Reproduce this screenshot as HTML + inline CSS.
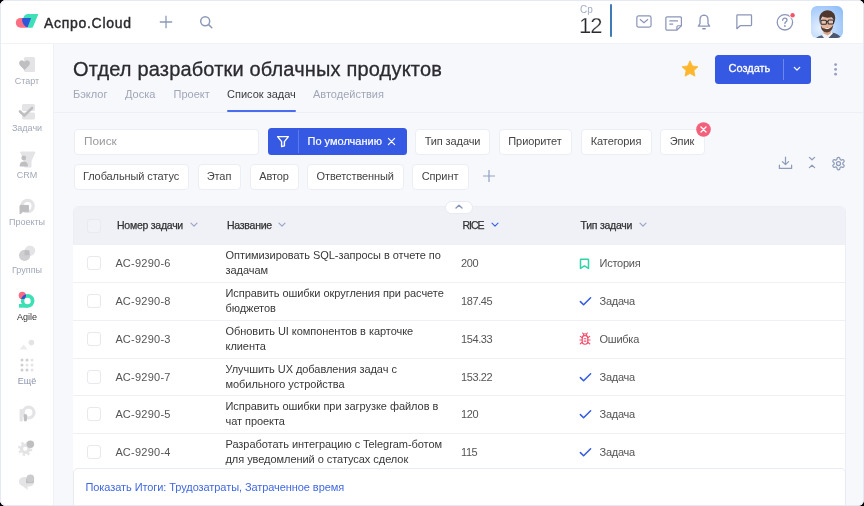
<!DOCTYPE html>
<html lang="ru">
<head>
<meta charset="utf-8">
<title>Аспро.Cloud</title>
<style>
*{box-sizing:border-box;margin:0;padding:0}
html,body{width:864px;height:506px;overflow:hidden;background:#000;font-family:"Liberation Sans",sans-serif;}
#frame{will-change:transform;position:absolute;left:0;top:0;width:864px;height:506px;background:#f7f8fc;border-radius:6px;overflow:hidden;}
#frameb{position:absolute;left:0;top:0;width:864px;height:506px;border:1px solid #e6e8f4;border-radius:6px;z-index:50;pointer-events:none}
.abs{position:absolute;white-space:nowrap}
#header{position:absolute;left:0;top:0;width:864px;height:44px;background:#fff;border-bottom:1px solid #f1f2f8}
#sidebar{position:absolute;left:0;top:44px;width:53.5px;height:462px;background:#fff;border-right:1px solid #f0f1f7}
.slab{position:absolute;left:0;width:54px;text-align:center;font-size:9px;color:#a2a8b8;line-height:10px}
.tab{position:absolute;top:88px;font-size:11px;line-height:13px;color:#a1a6b8;white-space:nowrap}
.fbtn{position:absolute;height:26px;background:#fff;border:1px solid #eceef6;border-radius:4px;font-size:11px;line-height:22.5px;color:#444;letter-spacing:-0.1px;text-align:center;white-space:nowrap}
.th{position:absolute;top:218px;letter-spacing:-0.25px;font-size:10.5px;line-height:14px;color:#333;white-space:nowrap;-webkit-text-stroke:0.25px #333}
.row{position:absolute;left:73px;width:772px;height:38px;border-top:1px solid #eef0f5;background:#fff}
.cb{position:absolute;left:13.5px;top:11px;width:14px;height:14px;border:1px solid #e8e8ed;border-radius:3px;background:#fff}
.num{position:absolute;left:42.5px;top:11px;letter-spacing:0.25px;font-size:11px;line-height:14px;color:#555;white-space:nowrap}
.ttl{position:absolute;left:152.5px;top:3px;letter-spacing:-0.05px;font-size:11px;line-height:15px;color:#383838;white-space:nowrap}
.rice{position:absolute;left:388px;top:11px;letter-spacing:-0.4px;font-size:11px;line-height:14px;color:#555}
.typ{position:absolute;left:526.5px;top:11px;letter-spacing:-0.25px;font-size:11px;line-height:14px;color:#555}
</style>
</head>
<body>
<div id="frame">
<div id="header">
<svg class="abs" style="left:15px;top:13px" width="25" height="16" viewBox="15 13 25 16">
<path d="M20.7 17.9 H27 V27.7 H20.7 A4.9 4.9 0 0 1 20.7 17.9 Z" fill="#fb6f84"/>
<path d="M27.4 14 H37.6 Q38.4 14 38.1 14.8 L33 27 Q32.7 27.7 32 27.7 H27.4 L30 18 H23.4 Q24.2 14.6 27.4 14 Z" fill="#3fe0b8"/>
<path d="M22.4 18 H31.1 L27.6 27.6 Q23 25.6 22.2 21 Q22 19.4 22.4 18 Z" fill="#2f55d8"/>
</svg>
<div class="abs" id="brand" style="left:44px;top:14.7px;font-size:14px;line-height:17px;color:#2a2a2e;-webkit-text-stroke:0.4px #2a2a2e;letter-spacing:0.7px">Аспро.Cloud</div>
<svg class="abs" style="left:159.3px;top:15px" width="14" height="14" viewBox="0 0 14 14"><path d="M7 0.8v12.4M0.8 7h12.4" stroke="#8c9ab8" stroke-width="1.3" fill="none"/></svg>
<svg class="abs" style="left:199px;top:15px" width="14" height="14" viewBox="0 0 14 14"><circle cx="6.2" cy="6.2" r="4.5" stroke="#8c9ab8" stroke-width="1.5" fill="none"/><path d="M9.6 9.6L12.8 12.8" stroke="#8c9ab8" stroke-width="1.5" stroke-linecap="round" fill="none"/></svg>
<div class="abs" style="left:580px;top:5px;font-size:10px;line-height:10px;color:#a3abc4">Ср</div>
<div class="abs" id="d12" style="left:579px;top:14.5px;font-size:22px;line-height:22px;color:#2a2a2e;letter-spacing:-1px;-webkit-text-stroke:0.25px #fff">12</div>
<div class="abs" style="left:609.5px;top:4px;width:2.5px;height:33px;background:#3f7cb6;border-radius:1px"></div>
<!-- mail -->
<svg class="abs" style="left:636.3px;top:15.3px" width="15.9" height="13" viewBox="0 0 17 14" preserveAspectRatio="none"><rect x="0.9" y="0.9" width="15.2" height="12.2" rx="2" fill="none" stroke="#8b95b8" stroke-width="1.3"/><path d="M4.2 4.6L8.5 8.2L12.8 4.6" fill="none" stroke="#8b95b8" stroke-width="1.3"/></svg>
<!-- note -->
<svg class="abs" style="left:664.8px;top:16.3px" width="17.3" height="15" viewBox="0 0 18 16" preserveAspectRatio="none"><path d="M2.4 0.9H15.6Q17.1 0.9 17.1 2.4V10.4L12.4 15.1H2.4Q0.9 15.1 0.9 13.6V2.4Q0.9 0.9 2.4 0.9Z" fill="none" stroke="#8b95b8" stroke-width="1.3"/><path d="M17 10.4H13.6Q12.4 10.4 12.4 11.6V15" fill="none" stroke="#8b95b8" stroke-width="1.3"/><path d="M4.5 5.3H13.5M4.5 8.6H8.5" stroke="#8b95b8" stroke-width="1.3"/></svg>
<!-- bell -->
<svg class="abs" style="left:697px;top:14px" width="14" height="17" viewBox="0 0 14 17"><path d="M7 1.2Q11 1.4 11 6V9.6L12.6 12.2H1.4L3 9.6V6Q3 1.4 7 1.2Z" fill="none" stroke="#8b95b8" stroke-width="1.3" stroke-linejoin="round"/><path d="M5.8 14.8H8.2" stroke="#8b95b8" stroke-width="1.4" stroke-linecap="round"/></svg>
<!-- chat -->
<svg class="abs" style="left:736.2px;top:13.8px" width="16.4" height="16.2" viewBox="0 0 17 17" preserveAspectRatio="none"><path d="M1.6 0.9H15.4Q16.1 0.9 16.1 1.6V11.4Q16.1 12.1 15.4 12.1H4.6L0.9 15.4V1.6Q0.9 0.9 1.6 0.9Z" fill="none" stroke="#8b95b8" stroke-width="1.3" stroke-linejoin="round"/></svg>
<!-- help -->
<svg class="abs" style="left:776px;top:12.5px" width="20" height="19" viewBox="0 0 20 19"><circle cx="8.9" cy="9.3" r="7.7" fill="none" stroke="#8b95b8" stroke-width="1.3"/><path d="M6.7 7.3Q6.8 5.2 8.9 5.2Q11 5.2 11 7Q11 8.2 9.8 8.9Q8.9 9.4 8.9 10.6" fill="none" stroke="#8b95b8" stroke-width="1.3" stroke-linecap="round"/><circle cx="8.9" cy="13" r="0.9" fill="#8b95b8"/><circle cx="16.6" cy="2.3" r="3.1" fill="#fff"/><circle cx="16.6" cy="2.3" r="2.2" fill="#f4546c"/></svg>
<!-- avatar -->
<svg class="abs" style="left:811px;top:6px" width="32" height="32" viewBox="0 0 32 32">
<defs><clipPath id="avc"><rect x="0" y="0" width="32" height="32" rx="6"/></clipPath>
<radialGradient id="avg" cx="0.3" cy="0.7" r="0.85"><stop offset="0" stop-color="#e6f1ff"/><stop offset="1" stop-color="#94c0f9"/></radialGradient></defs>
<g clip-path="url(#avc)"><rect width="32" height="32" fill="url(#avg)"/>
<path d="M4.5 32.5 Q6.5 30 11.6 29 L14 32.5 Z" fill="#56647c"/>
<path d="M16.5 32.5 L21 26.6 Q28 28 30.5 32.5 Z" fill="#4a576e"/>
<path d="M11 29.2 L13 27 L17 29 L20.8 25.8 L22 27.2 L17 32.5 H13.4 Z" fill="#f1f3f8"/>
<path d="M12.4 24 H19.6 L20 27 L16.6 29.6 L12.6 27.4 Z" fill="#d9a78c"/>
<ellipse cx="15.9" cy="17.4" rx="6.3" ry="7.8" fill="#e7b59b"/>
<path d="M9.7 19.4 Q10.4 26.4 16.2 26.4 Q21.4 26.2 22.3 18.8 Q20.6 22 18.6 22.2 Q16 21.2 13.4 22.4 Q11 22.2 9.7 19.4 Z" fill="#5b3f33"/>
<path d="M13.2 21.8 Q16.2 24.4 19.4 21.4 Q16.2 22.2 13.2 21.8Z" fill="#fbfbfb"/>
<path d="M8.9 17.4 Q6.6 8.4 12.6 5.2 Q19 2.6 23 7.4 Q25.2 11 23.3 17 Q23 12.8 20.8 11.2 Q15.4 12.4 11.4 10.6 Q9.4 13 8.9 17.4 Z" fill="#4e372c"/>
<rect x="9.9" y="14.3" width="5.5" height="3.9" rx="1" fill="#e9c3ad" stroke="#2a2c33" stroke-width="1.05"/><rect x="17" y="14" width="5.5" height="3.9" rx="1" fill="#e9c3ad" stroke="#2a2c33" stroke-width="1.05"/><path d="M15.4 15.6H17" stroke="#2a2c33" stroke-width="1"/>
</g></svg>
</div>
<div id="sidebar">
<!-- coords inside sidebar are page y - 43 -->
<svg class="abs" style="left:0;top:-1px" width="54" height="463" viewBox="0 43 54 463">
<!-- start -->
<rect x="24" y="57" width="11" height="15" rx="1.5" fill="#e4e4e6"/>
<path d="M24.5 70 L20 65.4 Q18.2 63 20 61 Q22.4 59.2 24.5 61.8 Q26.6 59.2 29 61 Q30.8 63 29 65.4 Z" fill="#bfbfc2"/>
<!-- tasks -->
<rect x="22" y="104" width="13" height="7" rx="1.5" fill="#e4e4e6"/><rect x="22" y="112.5" width="13" height="7" rx="1.5" fill="#e4e4e6"/>
<path d="M20 111.5 L24.3 115.6 L32 108" fill="none" stroke="#bfbfc2" stroke-width="2.6" stroke-linecap="round" stroke-linejoin="round"/>
<!-- crm -->
<path d="M20.5 152 H35 L31 161 V167 H24.5 V161 Z" fill="#e4e4e6" stroke="#e4e4e6" stroke-width="1" stroke-linejoin="round"/>
<circle cx="23.8" cy="158" r="2.4" fill="#bfbfc2"/><path d="M19.6 166.4 Q19.6 161.6 23.8 161.6 Q28 161.6 28 166.4 Z" fill="#bfbfc2"/>
<!-- projects -->
<circle cx="27.6" cy="206" r="5.6" fill="none" stroke="#e4e4e6" stroke-width="3.4"/>
<path d="M20 205.4 H28.4 V211.6 H23 L20 214 Z" fill="#bfbfc2" stroke="#bfbfc2" stroke-width="1" stroke-linejoin="round"/>
<!-- groups -->
<circle cx="30" cy="250.6" r="5.2" fill="#e4e4e6"/><circle cx="24.6" cy="255.4" r="5.6" fill="#cfcfd2"/>
<rect x="24.6" y="250.2" width="4.8" height="5" fill="#bfbfc2"/>
<!-- agile -->
<defs><clipPath id="agc"><circle cx="27.65" cy="300.85" r="6.85"/></clipPath></defs>
<circle cx="27.65" cy="300.85" r="6.85" fill="#3ddfb4"/><rect x="19" y="304" width="8.6" height="3.7" fill="#3ddfb4"/>
<circle cx="27.5" cy="301" r="3.2" fill="#fff"/>
<circle cx="22.3" cy="295.4" r="3.6" fill="#fb6b82"/>
<circle cx="22.3" cy="295.4" r="3.6" fill="#2f55d6" clip-path="url(#agc)"/>
<!-- small dots icon -->
<path d="M19.6 349.4 L23.6 344.6 L27.6 349.4 Z" fill="#ececee"/><circle cx="31.4" cy="342.6" r="2.8" fill="#e4e4e6"/>
<!-- grid -->
<g fill="#cfcfd3"><circle cx="22" cy="360" r="1.5"/><circle cx="27" cy="360" r="1.5"/><circle cx="22" cy="365" r="1.5"/><circle cx="22" cy="370" r="1.5"/><circle cx="27" cy="370" r="1.5"/></g>
<g fill="#e4e4e6"><circle cx="32" cy="360" r="1.5"/><circle cx="27" cy="365" r="1.5"/><circle cx="32" cy="365" r="1.5"/><circle cx="32" cy="370" r="1.5"/></g>
<!-- P icon -->
<circle cx="28.6" cy="412.6" r="5.4" fill="none" stroke="#e4e4e6" stroke-width="3.2"/><rect x="19.6" y="409" width="3.2" height="12.4" rx="1" fill="#e4e4e6"/>
<rect x="23.8" y="414" width="3.2" height="7.4" rx="1.6" fill="#bfbfc2"/>
<!-- gear -->
<g fill="none" stroke="#e4e4e6"><circle cx="25.2" cy="448.8" r="3.7" stroke-width="3.2"/><circle cx="25.2" cy="448.8" r="5.9" stroke-width="2.6" stroke-dasharray="2.3 2.33"/></g>
<circle cx="30.4" cy="444.3" r="3.7" fill="#bfbfc2"/>
<!-- chat -->
<path d="M24.6 477 H29.4 Q34 477 34 481.6 V482 Q34 486.4 29.4 486.4 H27.6 V490 L23 486.2 Q19 485.4 19 481.6 Q19 477 24.6 477 Z" fill="#e4e4e6"/>
<path d="M26 478.6 H34 V481.6 Q34 483.2 32.4 483.2 H26 Z" fill="#bfbfc2"/><circle cx="30.4" cy="478.4" r="3.8" fill="#cbcbce"/>
</svg>
<div class="slab" style="top:32px">Старт</div>
<div class="slab" style="top:79px">Задачи</div>
<div class="slab" style="top:126px">CRM</div>
<div class="slab" style="top:173px">Проекты</div>
<div class="slab" style="top:220.5px">Группы</div>
<div class="slab" style="top:267.5px;color:#333">Agile</div>
<div class="slab" style="top:332px;color:#8b94ab">Ещё</div>
</div>
<div id="main">
<div class="abs" id="title" style="left:73px;top:57px;font-size:20px;line-height:24px;color:#2b2b2f;letter-spacing:0.17px;-webkit-text-stroke:0.3px #2b2b2f">Отдел разработки облачных продуктов</div>
<div class="abs" style="left:54px;top:111.5px;width:810px;height:1px;background:#eff0f7"></div>
<div class="tab" id="t1" style="left:73px">Бэклог</div>
<div class="tab" id="t2" style="left:125px">Доска</div>
<div class="tab" id="t3" style="left:173.5px">Проект</div>
<div class="tab" id="t4" style="left:227px;color:#3c3c40">Список задач</div>
<div class="tab" id="t5" style="left:313px">Автодействия</div>
<div class="abs" style="left:227px;top:110px;width:69px;height:2px;background:#4a6cf0;border-radius:1px"></div>
<!-- star -->
<svg class="abs" style="left:681px;top:60px" width="18" height="17" viewBox="0 0 18 17"><path d="M9 0.8 L11.4 6 L17 6.7 L12.9 10.6 L13.95 16.2 L9 13.45 L4.05 16.2 L5.1 10.6 L1 6.7 L6.6 6 Z" fill="#fcb72e" stroke="#fcb72e" stroke-width="0.8" stroke-linejoin="round"/></svg>
<!-- create button -->
<div class="abs" style="left:715px;top:55px;width:95.5px;height:28.5px;background:#3659e3;border-radius:3.5px"></div>
<div class="abs" id="create" style="left:728.5px;top:61.3px;font-size:11px;line-height:14px;color:#fff;-webkit-text-stroke:0.3px #fff">Создать</div>
<div class="abs" style="left:783px;top:59px;width:1px;height:21px;background:#6d87ec"></div>
<svg class="abs" style="left:792px;top:65px" width="10" height="8" viewBox="0 0 10 8"><path d="M2.3 2.4L5 5.1L7.7 2.4" fill="none" stroke="#fff" stroke-width="1.3" stroke-linecap="round" stroke-linejoin="round"/></svg>
<svg class="abs" style="left:832px;top:61px" width="8" height="17" viewBox="0 0 8 17"><g fill="#97a0be"><circle cx="3.6" cy="3.6" r="1.4"/><circle cx="3.6" cy="8.4" r="1.4"/><circle cx="3.6" cy="13.2" r="1.4"/></g></svg>

<!-- filters row 1 -->
<div class="fbtn" style="left:73.5px;top:128.5px;width:185.5px;text-align:left;padding-left:9.5px;color:#9a9a9e;font-size:11.8px;letter-spacing:0" id="srch">Поиск</div>
<div class="abs" style="left:267.5px;top:128px;width:139.5px;height:27px;background:#3659e3;border-radius:3.5px"></div>
<div class="abs" style="left:297.5px;top:130px;width:1px;height:23px;background:#5d7aea"></div>
<svg class="abs" style="left:276px;top:135px" width="14" height="13" viewBox="0 0 14 13"><path d="M1.6 1.6H12.4L8.4 6.6V10.8L5.6 11.6V6.6Z" fill="none" stroke="#fff" stroke-width="1.4" stroke-linejoin="round"/></svg>
<div class="abs" id="deflt" style="left:307.5px;top:134px;font-size:11px;line-height:14px;color:#fff;-webkit-text-stroke:0.2px #fff">По умолчанию</div>
<svg class="abs" style="left:387px;top:137px" width="9" height="9" viewBox="0 0 9 9"><path d="M1.4 1.4L7.6 7.6M7.6 1.4L1.4 7.6" stroke="#fff" stroke-width="1.2" stroke-linecap="round"/></svg>
<div class="fbtn" id="f1" style="left:415px;top:128.5px;width:75px">Тип задачи</div>
<div class="fbtn" id="f2" style="left:498.5px;top:128.5px;width:73px">Приоритет</div>
<div class="fbtn" id="f3" style="left:580.5px;top:128.5px;width:71px">Категория</div>
<div class="fbtn" id="f4" style="left:659.5px;top:128.5px;width:45px">Эпик</div>
<svg class="abs" style="left:695.5px;top:122px" width="15" height="15" viewBox="0 0 15 15"><circle cx="7.5" cy="7.5" r="7.3" fill="#f3607c"/><path d="M5 5L10 10M10 5L5 10" stroke="#fff" stroke-width="1.3" stroke-linecap="round"/></svg>
<!-- filters row 2 -->
<div class="fbtn" id="f5" style="left:73.5px;top:163.5px;width:115px">Глобальный статус</div>
<div class="fbtn" id="f6" style="left:197.5px;top:163.5px;width:43px">Этап</div>
<div class="fbtn" id="f7" style="left:249.5px;top:163.5px;width:49px">Автор</div>
<div class="fbtn" id="f8" style="left:307px;top:163.5px;width:96.5px">Ответственный</div>
<div class="fbtn" id="f9" style="left:411.5px;top:163.5px;width:57px">Спринт</div>
<svg class="abs" style="left:482px;top:169px" width="14" height="14" viewBox="0 0 14 14"><path d="M7 1v12M1 7h12" stroke="#8fa0c4" stroke-width="1.2" fill="none"/></svg>
<!-- right icons -->
<svg class="abs" style="left:778px;top:156px" width="15" height="14" viewBox="0 0 15 14"><path d="M7.5 1V8.4M4.4 5.6L7.5 8.6L10.6 5.6M1.4 9.2V12.4H13.6V9.2" fill="none" stroke="#8f9cba" stroke-width="1.25" stroke-linecap="round" stroke-linejoin="round"/></svg>
<svg class="abs" style="left:806.5px;top:156px" width="10" height="13" viewBox="0 0 10 13"><path d="M2.4 1.4L5 3.8L7.6 1.4M2.4 11.6L5 9.2L7.6 11.6" fill="none" stroke="#8f9cba" stroke-width="1.25" stroke-linecap="round" stroke-linejoin="round"/></svg>
<svg class="abs" style="left:831px;top:155.5px" width="15" height="15" viewBox="0 0 24 24"><path d="M12.22 2h-.44a2 2 0 0 0-2 2v.18a2 2 0 0 1-1 1.73l-.43.25a2 2 0 0 1-2 0l-.15-.08a2 2 0 0 0-2.73.73l-.22.38a2 2 0 0 0 .73 2.73l.15.1a2 2 0 0 1 1 1.72v.51a2 2 0 0 1-1 1.74l-.15.09a2 2 0 0 0-.73 2.73l.22.38a2 2 0 0 0 2.73.73l.15-.08a2 2 0 0 1 2 0l.43.25a2 2 0 0 1 1 1.73V20a2 2 0 0 0 2 2h.44a2 2 0 0 0 2-2v-.18a2 2 0 0 1 1-1.73l.43-.25a2 2 0 0 1 2 0l.15.08a2 2 0 0 0 2.73-.73l.22-.39a2 2 0 0 0-.73-2.73l-.15-.08a2 2 0 0 1-1-1.74v-.5a2 2 0 0 1 1-1.74l.15-.09a2 2 0 0 0 .73-2.73l-.22-.38a2 2 0 0 0-2.73-.73l-.15.08a2 2 0 0 1-2 0l-.43-.25a2 2 0 0 1-1-1.73V4a2 2 0 0 0-2-2z" fill="none" stroke="#8f9cba" stroke-width="2"/><circle cx="12" cy="12" r="3.2" fill="none" stroke="#8f9cba" stroke-width="2"/></svg>
</div>
<div id="table">
<div class="abs" style="left:72.5px;top:206px;width:773.5px;height:300px;background:#fff;border:1px solid #eceef5;border-radius:5px"></div>
<div class="abs" style="left:73.5px;top:207px;width:771.5px;height:37px;background:#eff1f7;border-radius:4px 4px 0 0"></div>
<div class="abs" style="left:86.5px;top:219px;width:14px;height:14px;border:1px solid #e8eaf1;border-radius:3px;background:#f1f3f8"></div>
<div class="th" id="h1" style="left:117px">Номер задачи</div><svg class="abs" style="left:190px;top:222px" width="8" height="6" viewBox="0 0 8 6"><path d="M1 1.2L4 4.2L7 1.2" fill="none" stroke="#9aa5c4" stroke-width="1.2" stroke-linecap="round" stroke-linejoin="round"/></svg>
<div class="th" id="h2" style="left:227px">Название</div><svg class="abs" style="left:278px;top:222px" width="8" height="6" viewBox="0 0 8 6"><path d="M1 1.2L4 4.2L7 1.2" fill="none" stroke="#9aa5c4" stroke-width="1.2" stroke-linecap="round" stroke-linejoin="round"/></svg>
<div class="th" id="h3" style="left:462.5px;letter-spacing:-1px">RICE</div><svg class="abs" style="left:490.5px;top:222px" width="8" height="6" viewBox="0 0 8 6"><path d="M1 1.2L4 4.2L7 1.2" fill="none" stroke="#3a62e6" stroke-width="1.2" stroke-linecap="round" stroke-linejoin="round"/></svg>
<div class="th" id="h4" style="left:580.5px">Тип задачи</div><svg class="abs" style="left:639px;top:222px" width="8" height="6" viewBox="0 0 8 6"><path d="M1 1.2L4 4.2L7 1.2" fill="none" stroke="#9aa5c4" stroke-width="1.2" stroke-linecap="round" stroke-linejoin="round"/></svg>
<div class="abs" style="left:445px;top:200.5px;width:28px;height:13px;background:#fff;border:1px solid #e8eaf2;border-radius:7px"></div>
<svg class="abs" style="left:454px;top:203px" width="10" height="7" viewBox="0 0 10 7"><path d="M2 5L5 2.2L8 5" fill="none" stroke="#8797ba" stroke-width="1.4" stroke-linecap="round" stroke-linejoin="round"/></svg>
<div class="row" style="top:244px;height:38px"><div class="cb"></div><div class="num" id="n0">АС-9290-6</div><div class="ttl" id="tt0">Оптимизировать SQL-запросы в отчете по<br>задачам</div><div class="rice" id="r0">200</div><svg class="abs" style="left:506.3px;top:12.6px" width="11" height="12" viewBox="0 0 11 12"><path d="M1.5 1.8Q1.5 1.2 2.1 1.2H8.9Q9.5 1.2 9.5 1.8V10.4L5.5 7.9L1.5 10.4Z" fill="none" stroke="#2ed3a6" stroke-width="1.5" stroke-linejoin="round"/></svg><div class="typ" id="ty0">История</div></div>
<div class="row" style="top:282px;height:38px"><div class="cb"></div><div class="num" id="n1">АС-9290-8</div><div class="ttl" id="tt1">Исправить ошибки округления при расчете<br>бюджетов</div><div class="rice" id="r1">187.45</div><svg class="abs" style="left:506px;top:13px" width="13" height="11" viewBox="0 0 13 11"><path d="M1.4 5.6L4.6 8.8L11.6 1.8" fill="none" stroke="#3359e2" stroke-width="1.5" stroke-linecap="round" stroke-linejoin="round"/></svg><div class="typ" id="ty1">Задача</div></div>
<div class="row" style="top:320px;height:38px"><div class="cb"></div><div class="num" id="n2">АС-9290-3</div><div class="ttl" id="tt2">Обновить UI компонентов в карточке<br>клиента</div><div class="rice" id="r2">154.33</div><svg class="abs" style="left:506px;top:11.2px" width="12" height="14" viewBox="0 0 12 14"><g fill="none" stroke="#f0506e" stroke-width="1.15" stroke-linecap="round"><rect x="3.2" y="3.6" width="5.6" height="8.6" rx="2.6"/><path d="M4.3 3.6Q4.3 1.7 6 1.7Q7.7 1.7 7.7 3.6"/><path d="M3.2 5.8L1.3 4.4M3.2 8H0.9M3.2 10.2L1.3 11.8M8.8 5.8L10.7 4.4M8.8 8H11.1M8.8 10.2L10.7 11.8M5.1 6.7H6.9M5.1 9.1H6.9M3.6 1L4.6 2.2M8.4 1L7.4 2.2"/></g></svg><div class="typ" id="ty2">Ошибка</div></div>
<div class="row" style="top:358px;height:37px"><div class="cb"></div><div class="num" id="n3">АС-9290-7</div><div class="ttl" id="tt3">Улучшить UX добавления задач с<br>мобильного устройства</div><div class="rice" id="r3">153.22</div><svg class="abs" style="left:506px;top:13px" width="13" height="11" viewBox="0 0 13 11"><path d="M1.4 5.6L4.6 8.8L11.6 1.8" fill="none" stroke="#3359e2" stroke-width="1.5" stroke-linecap="round" stroke-linejoin="round"/></svg><div class="typ" id="ty3">Задача</div></div>
<div class="row" style="top:395px;height:38px"><div class="cb"></div><div class="num" id="n4">АС-9290-5</div><div class="ttl" id="tt4">Исправить ошибки при загрузке файлов в<br>чат проекта</div><div class="rice" id="r4">120</div><svg class="abs" style="left:506px;top:13px" width="13" height="11" viewBox="0 0 13 11"><path d="M1.4 5.6L4.6 8.8L11.6 1.8" fill="none" stroke="#3359e2" stroke-width="1.5" stroke-linecap="round" stroke-linejoin="round"/></svg><div class="typ" id="ty4">Задача</div></div>
<div class="row" style="top:433px;height:38px"><div class="cb"></div><div class="num" id="n5">АС-9290-4</div><div class="ttl" id="tt5">Разработать интеграцию с Telegram-ботом<br>для уведомлений о статусах сделок</div><div class="rice" id="r5">115</div><svg class="abs" style="left:506px;top:13px" width="13" height="11" viewBox="0 0 13 11"><path d="M1.4 5.6L4.6 8.8L11.6 1.8" fill="none" stroke="#3359e2" stroke-width="1.5" stroke-linecap="round" stroke-linejoin="round"/></svg><div class="typ" id="ty5">Задача</div></div>
<div class="abs" style="left:72.5px;top:468px;width:773.5px;height:40px;background:#fff;border:1px solid #e9ebf4;border-radius:5px 5px 0 0"></div>
<div class="abs" id="foot" style="left:85.5px;top:479.6px;letter-spacing:-0.075px;font-size:11px;line-height:14px;color:#4068e0">Показать Итоги: Трудозатраты, Затраченное время</div>
</div>
</div>
<div id="frameb"></div>
</body>
</html>
